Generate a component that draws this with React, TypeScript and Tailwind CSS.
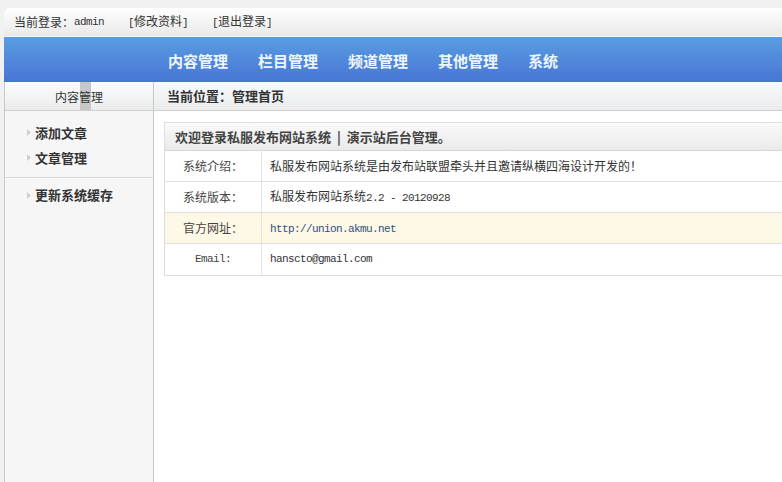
import React from "react";

const cjk = { fontFamily: '"Noto Sans CJK SC", "Noto Sans", sans-serif' };
const mono = { fontFamily: '"Liberation Mono", "DejaVu Sans Mono", monospace' };

function M({ children }: { children: React.ReactNode }) {
  return (
    <span style={mono} className="text-[11px] tracking-[-0.6px]">
      {children}
    </span>
  );
}

function Arrow() {
  return (
    <svg width="4" height="7" viewBox="0 0 4 7" className="mr-[4px]">
      <path d="M0 0 L4 3.5 L0 7 Z" fill="#cfcfcf" />
    </svg>
  );
}

const navItems = ["内容管理", "栏目管理", "频道管理", "其他管理", "系统"];

export default function App() {
  return (
    <div
      style={cjk}
      className="w-[782px] h-[482px] overflow-hidden bg-[#f1f1f1] flex flex-col text-[#333]"
    >
      {/* top bar */}
      <div className="h-[37px] pt-[8px] pl-[4px] shrink-0">
        <div className="h-[29px] rounded-tl-[6px] bg-gradient-to-b from-white to-[#e9e9e9] flex items-center pl-[10px] text-[12px] text-[#333] border-b border-[#f8f8f8]">
          <span>当前登录：</span>
          <M>admin</M>
          <span className="ml-[24px]">
            <M>[</M>修改资料<M>]</M>
          </span>
          <span className="ml-[24px]">
            <M>[</M>退出登录<M>]</M>
          </span>
        </div>
      </div>

      {/* nav */}
      <div className="ml-[4px] h-[45px] shrink-0 bg-gradient-to-b from-[#5a9de1] to-[#4875d5] flex items-center pl-[164px] gap-[30px]">
        {navItems.map((n) => (
          <span key={n} className="text-[15px] font-bold text-[#eef6ff] leading-none pt-[2px]">
            {n}
          </span>
        ))}
      </div>

      {/* body */}
      <div className="flex flex-1 ml-[4px] min-h-0">
        {/* sidebar */}
        <div className="w-[150px] shrink-0 border-l border-r border-[#c8c8c8] bg-[#f6f6f6] flex flex-col">
          <div className="relative h-[29px] shrink-0 bg-gradient-to-b from-[#fbfdff] to-[#ebebeb] border-b border-[#d0d0d0] flex items-center justify-center text-[12px] text-[#333]">
            <div className="absolute left-[75px] top-0 w-[11px] h-full bg-[#c7c7c7]" />
            <span className="relative pt-[2px]">内容管理</span>
          </div>
          <div className="pt-[9px] flex flex-col">
            <div className="h-[25px] flex items-center pl-[22px] text-[13px] font-bold text-[#333]">
              <Arrow />
              添加文章
            </div>
            <div className="h-[25px] flex items-center pl-[22px] text-[13px] font-bold text-[#333]">
              <Arrow />
              文章管理
            </div>
            <div className="mt-[7px] border-t border-[#d8d8d8] border-b-white border-b" />
            <div className="h-[32px] flex items-center pl-[22px] text-[13px] font-bold text-[#333]">
              <Arrow />
              更新系统缓存
            </div>
          </div>
        </div>

        {/* main */}
        <div className="flex-1 bg-white flex flex-col min-w-0">
          <div className="h-[29px] shrink-0 bg-gradient-to-b from-[#f6fbff] to-[#ebebeb] border-b border-[#d0d0d0] flex items-center pl-[13px] text-[13px] font-bold text-[#333]">
            当前位置：管理首页
          </div>
          <div className="pl-[10px] pt-[11px]">
            <div className="w-[640px] border border-[#dcdcdc] border-r-0">
              <div className="h-[28px] bg-gradient-to-b from-[#fafafa] to-[#eaeaea] border-b border-[#d6d6d6] flex items-center pl-[10px] text-[13px] font-bold text-[#444]">
                欢迎登录私服发布网站系统 &nbsp;|&nbsp; 演示站后台管理。
              </div>
              <div>
                {[
                  { l: "系统介绍：", v: <span>私服发布网站系统是由发布站联盟牵头并且邀请纵横四海设计开发的！</span> },
                  {
                    l: "系统版本：",
                    v: (
                      <span>
                        私服发布网站系统<M>2.2 - 20120928</M>
                      </span>
                    ),
                  },
                  {
                    l: "官方网址：",
                    v: (
                      <span className="text-[#2d4f8a]">
                        <M>http://union.akmu.net</M>
                      </span>
                    ),
                    hl: true,
                  },
                  { l: <M>Email:</M>, v: <M>hanscto@gmail.com</M> },
                ].map((r, i) => (
                  <div
                    key={i}
                    className={`flex h-[31px] ${i < 3 ? "border-b border-[#e0e0e0]" : ""} ${
                      r.hl ? "bg-[#fef8e6]" : "bg-white"
                    }`}
                  >
                    <div className="w-[97px] shrink-0 border-r border-[#e3e3e3] flex items-center justify-center text-[12px] text-[#444]">
                      {r.l}
                    </div>
                    <div className="flex-1 flex items-center pl-[8px] text-[12px] text-[#333]">{r.v}</div>
                  </div>
                ))}
              </div>
            </div>
          </div>
        </div>
      </div>
    </div>
  );
}
